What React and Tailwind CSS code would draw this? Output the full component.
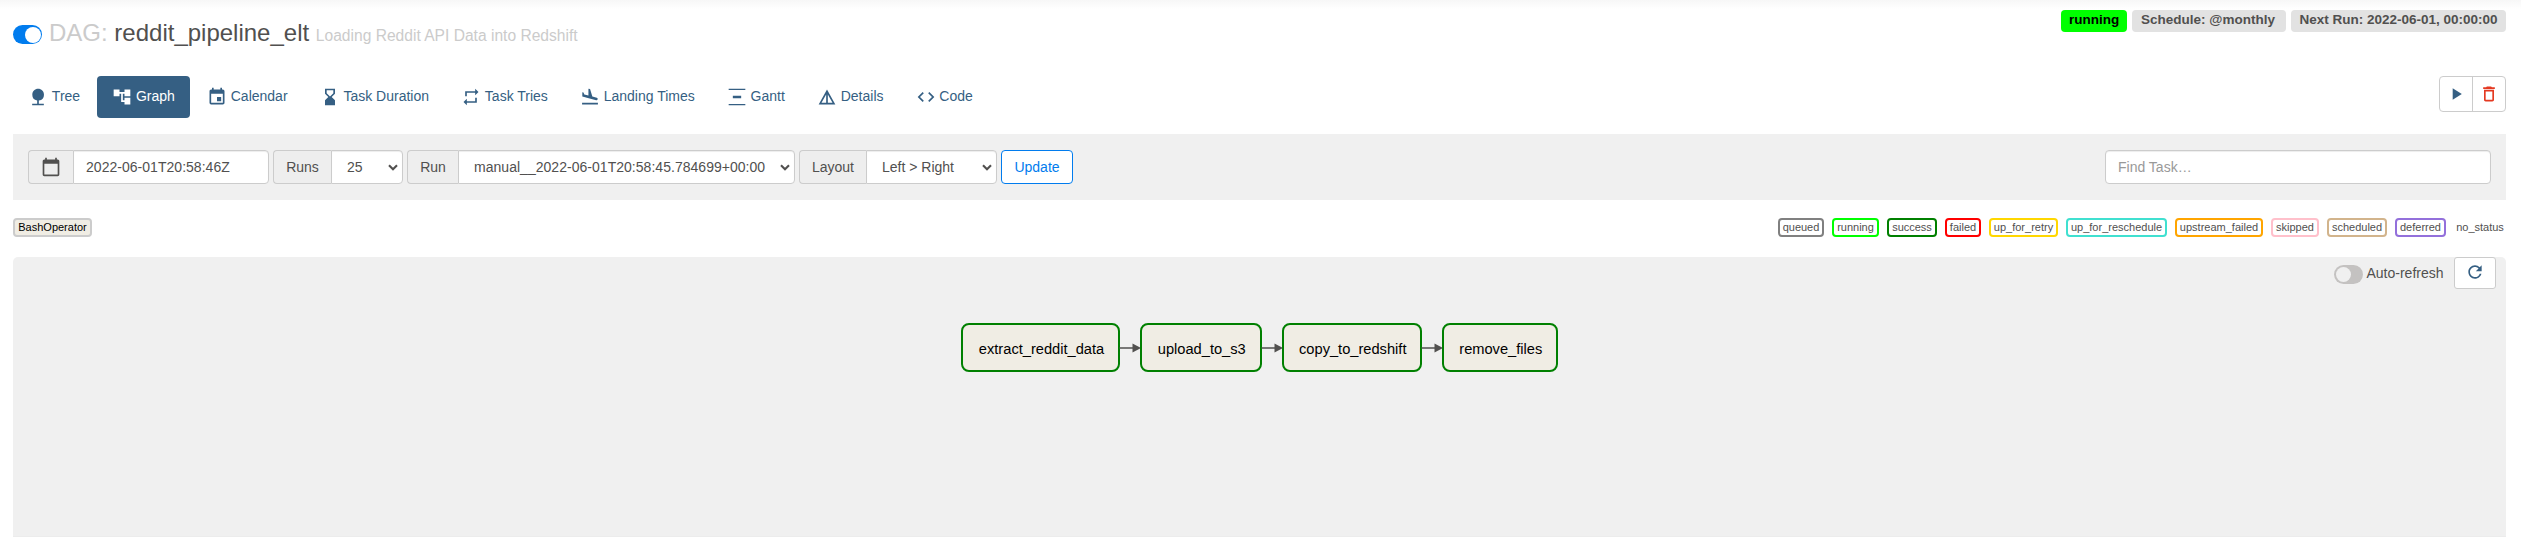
import React from 'react';
import {
  MdNature, MdAccountTree, MdEvent, MdHourglassBottom, MdRepeat, MdFlightLand,
  MdDetails, MdCode, MdPlayArrow, MdDeleteOutline, MdCalendarToday, MdRefresh,
} from 'react-icons/md';

function GanttIcon({ className }) {
  return (
    <svg className={className} viewBox="0 0 24 24" fill="currentColor">
      <path d="M2 2h20v1.6H2zM2 20.4h20V22H2zM7 10.5h10v3H7z" />
    </svg>
  );
}

const tabs = [
  { name: 'Tree', Icon: MdNature },
  { name: 'Graph', Icon: MdAccountTree, active: true },
  { name: 'Calendar', Icon: MdEvent },
  { name: 'Task Duration', Icon: MdHourglassBottom },
  { name: 'Task Tries', Icon: MdRepeat },
  { name: 'Landing Times', Icon: MdFlightLand },
  { name: 'Gantt', Icon: GanttIcon },
  { name: 'Details', Icon: MdDetails },
  { name: 'Code', Icon: MdCode },
];

const statuses = [
  ['queued', 'w-[46px] border-[#808080]'],
  ['running', 'w-[47px] border-[#00ff00]'],
  ['success', 'w-[50px] border-[#008000]'],
  ['failed', 'w-[36px] border-[#ff0000]'],
  ['up_for_retry', 'w-[69px] border-[#ffd700]'],
  ['up_for_reschedule', 'w-[101px] border-[#40e0d0]'],
  ['upstream_failed', 'w-[88px] border-[#ffa500]'],
  ['skipped', 'w-[48px] border-[#ffc0cb]'],
  ['scheduled', 'w-[60px] border-[#d2b48c]'],
  ['deferred', 'w-[51px] border-[#9370db]'],
  ['no_status', 'w-[52px] border-transparent'],
];

const nodes = [
  ['extract_reddit_data', 'w-[159px]'],
  ['upload_to_s3', 'w-[121.5px]'],
  ['copy_to_redshift', 'w-[140.5px]'],
  ['remove_files', 'w-[115.5px]'],
];

function Chevron() {
  return (
    <svg className="h-[7px] w-[10px] shrink-0" viewBox="0 0 10 7" fill="none">
      <path d="M1 1.2 5 5.2 9 1.2" stroke="#51504f" strokeWidth="2.1" />
    </svg>
  );
}

function Addon({ className, children }) {
  return (
    <span className={`flex items-center justify-center rounded-l border border-r-0 border-[#ccc] bg-[#eee] ${className}`}>
      {children}
    </span>
  );
}

function Select({ className, children }) {
  return (
    <span className={`flex items-center justify-between rounded-r border border-[#ccc] bg-white pr-[4px] pl-[15px] shadow-[inset_0_1px_1px_rgba(0,0,0,0.075)] ${className}`}>
      {children}
      <Chevron />
    </span>
  );
}

function Arrow() {
  return (
    <svg className="h-[10px] w-[20px] shrink-0 overflow-visible" viewBox="0 0 20 10">
      <path d="M-.5 5H15" stroke="#51504f" strokeWidth="1.5" />
      <path d="M12.5 .5 21 5 12.5 9.5Z" fill="#51504f" />
    </svg>
  );
}

export default function App() {
  return (
    <div className="h-[545px] w-[2521px] overflow-hidden bg-white bg-[linear-gradient(#f7f7f7,#fff_9px)] bg-no-repeat pr-[15px] pl-[13px] font-['Liberation_Sans',Arial,sans-serif] text-[14px] leading-[20px] text-[#51504f]">
      <header className="flex h-[76px] items-start justify-between pt-[10px]">
        <div className="flex pt-[10px]">
          <span className="mt-[5px] flex h-[19px] w-[29px] items-center justify-end rounded-full bg-[#017cee] pr-[1.5px]">
            <span className="size-[16px] rounded-full bg-white" />
          </span>
          <h1 className="ml-[7px] text-[24px] leading-[26px] whitespace-pre">
            <span className="text-[#cbcbcb]">DAG: </span>
            <span>reddit_pipeline_elt </span>
            <span className="text-[15.6px] text-[#cbcbcb]">Loading Reddit API Data into Redshift</span>
          </h1>
        </div>
        <div className="flex gap-[5px] text-[13.5px] leading-[20px] font-bold whitespace-nowrap">
          <span className="h-[22px] w-[66px] rounded bg-[#00ff00] pl-[8px] text-black">running</span>
          <span className="h-[22px] w-[154px] rounded bg-[#e2e2e2] pl-[9px]">Schedule: @monthly</span>
          <span className="h-[22px] w-[215px] rounded bg-[#e2e2e2] pl-[8.5px]">Next Run: 2022-06-01, 00:00:00</span>
        </div>
      </header>

      <div className="flex h-[58px] items-start justify-between">
        <nav className="flex gap-[2px]">
          {tabs.map(({ name, Icon, active }) => (
            <a key={name} className={`flex h-[42px] items-center gap-[3.85px] rounded px-[15px] whitespace-nowrap ${active ? 'bg-[#355f83] text-white' : 'text-[#355f83]'}`}>
              <Icon className="size-[20px] shrink-0" />
              <span className="pb-[2px]">{name}</span>
            </a>
          ))}
        </nav>
        <div className="flex h-[36px] w-[67px] rounded border border-[#ccc] bg-white">
          <span className="flex flex-1 items-center justify-center border-r border-[#ccc] text-[#355f83]">
            <MdPlayArrow className="size-[20px]" />
          </span>
          <span className="flex flex-1 items-center justify-center text-[#e43921]">
            <MdDeleteOutline className="size-[20px]" />
          </span>
        </div>
      </div>

      <section className="flex h-[66px] items-center justify-between bg-[#f0f0f0] pr-[15px] pl-[15px] whitespace-nowrap">
        <div className="flex h-[34px] gap-[4px]">
          <div className="flex">
            <Addon className="w-[45px]"><MdCalendarToday className="size-[20px]" /></Addon>
            <span className="flex w-[196px] items-center rounded-r border border-[#ccc] bg-white pl-[12px] tracking-[0.03px] shadow-[inset_0_1px_1px_rgba(0,0,0,0.075)]">2022-06-01T20:58:46Z</span>
          </div>
          <div className="flex">
            <Addon className="w-[58px]">Runs</Addon>
            <Select className="w-[72px]">25</Select>
          </div>
          <div className="flex">
            <Addon className="w-[51px]">Run</Addon>
            <Select className="w-[337px] tracking-[0.03px]">manual__2022-06-01T20:58:45.784699+00:00</Select>
          </div>
          <div className="flex">
            <Addon className="w-[67px]">Layout</Addon>
            <Select className="w-[131px]">Left &gt; Right</Select>
          </div>
          <span className="flex w-[72px] items-center justify-center rounded border border-[#017cee] bg-white text-[#017cee]">Update</span>
        </div>
        <div className="flex h-[34px] w-[386px] items-center rounded border border-[#ccc] bg-white pl-[12px] text-[#999] shadow-[inset_0_1px_1px_rgba(0,0,0,0.075)]">Find Task…</div>
      </section>

      <section className="flex h-[57px] items-start justify-between pt-[18px] text-[11px] leading-[15px] whitespace-nowrap">
        <span className="flex h-[19px] w-[79px] justify-center rounded border-2 border-[#ccc] bg-[#f0ede4] text-black">BashOperator</span>
        <div className="flex gap-[8px]">
          {statuses.map(([name, style]) => (
            <span key={name} className={`flex h-[19px] justify-center rounded border-2 bg-white ${style}`}>{name}</span>
          ))}
        </div>
      </section>

      <main className="h-[280px] rounded-t-[5px] border-b border-[#ececec] bg-[#f0f0f0]">
        <div className="flex h-[66px] items-start justify-end pr-[10px]">
          <span className="mt-[8px] flex h-[19px] w-[29px] items-center rounded-full bg-[#c4c2c1] pl-[2px]">
            <span className="size-[15px] rounded-full bg-[#f0f0f0]" />
          </span>
          <span className="mt-[6px] ml-[3.5px] w-[87.5px]">Auto-refresh</span>
          <span className="flex h-[32px] w-[42px] items-center justify-center rounded-[3px] border border-[#ccc] bg-white pb-[2px] text-[#355f83]">
            <MdRefresh className="size-[20px]" />
          </span>
        </div>
        <div className="flex items-center pl-[948px] text-[14.65px] text-black">
          {nodes.map(([name, width], i) => (
            <React.Fragment key={name}>
              {i > 0 && <Arrow />}
              <div className={`flex h-[49px] shrink-0 items-center justify-center rounded-[8px] border-2 border-[#008000] bg-[#f0ede4] pt-[3px] pl-[2px] ${width}`}>{name}</div>
            </React.Fragment>
          ))}
        </div>
      </main>
    </div>
  );
}
